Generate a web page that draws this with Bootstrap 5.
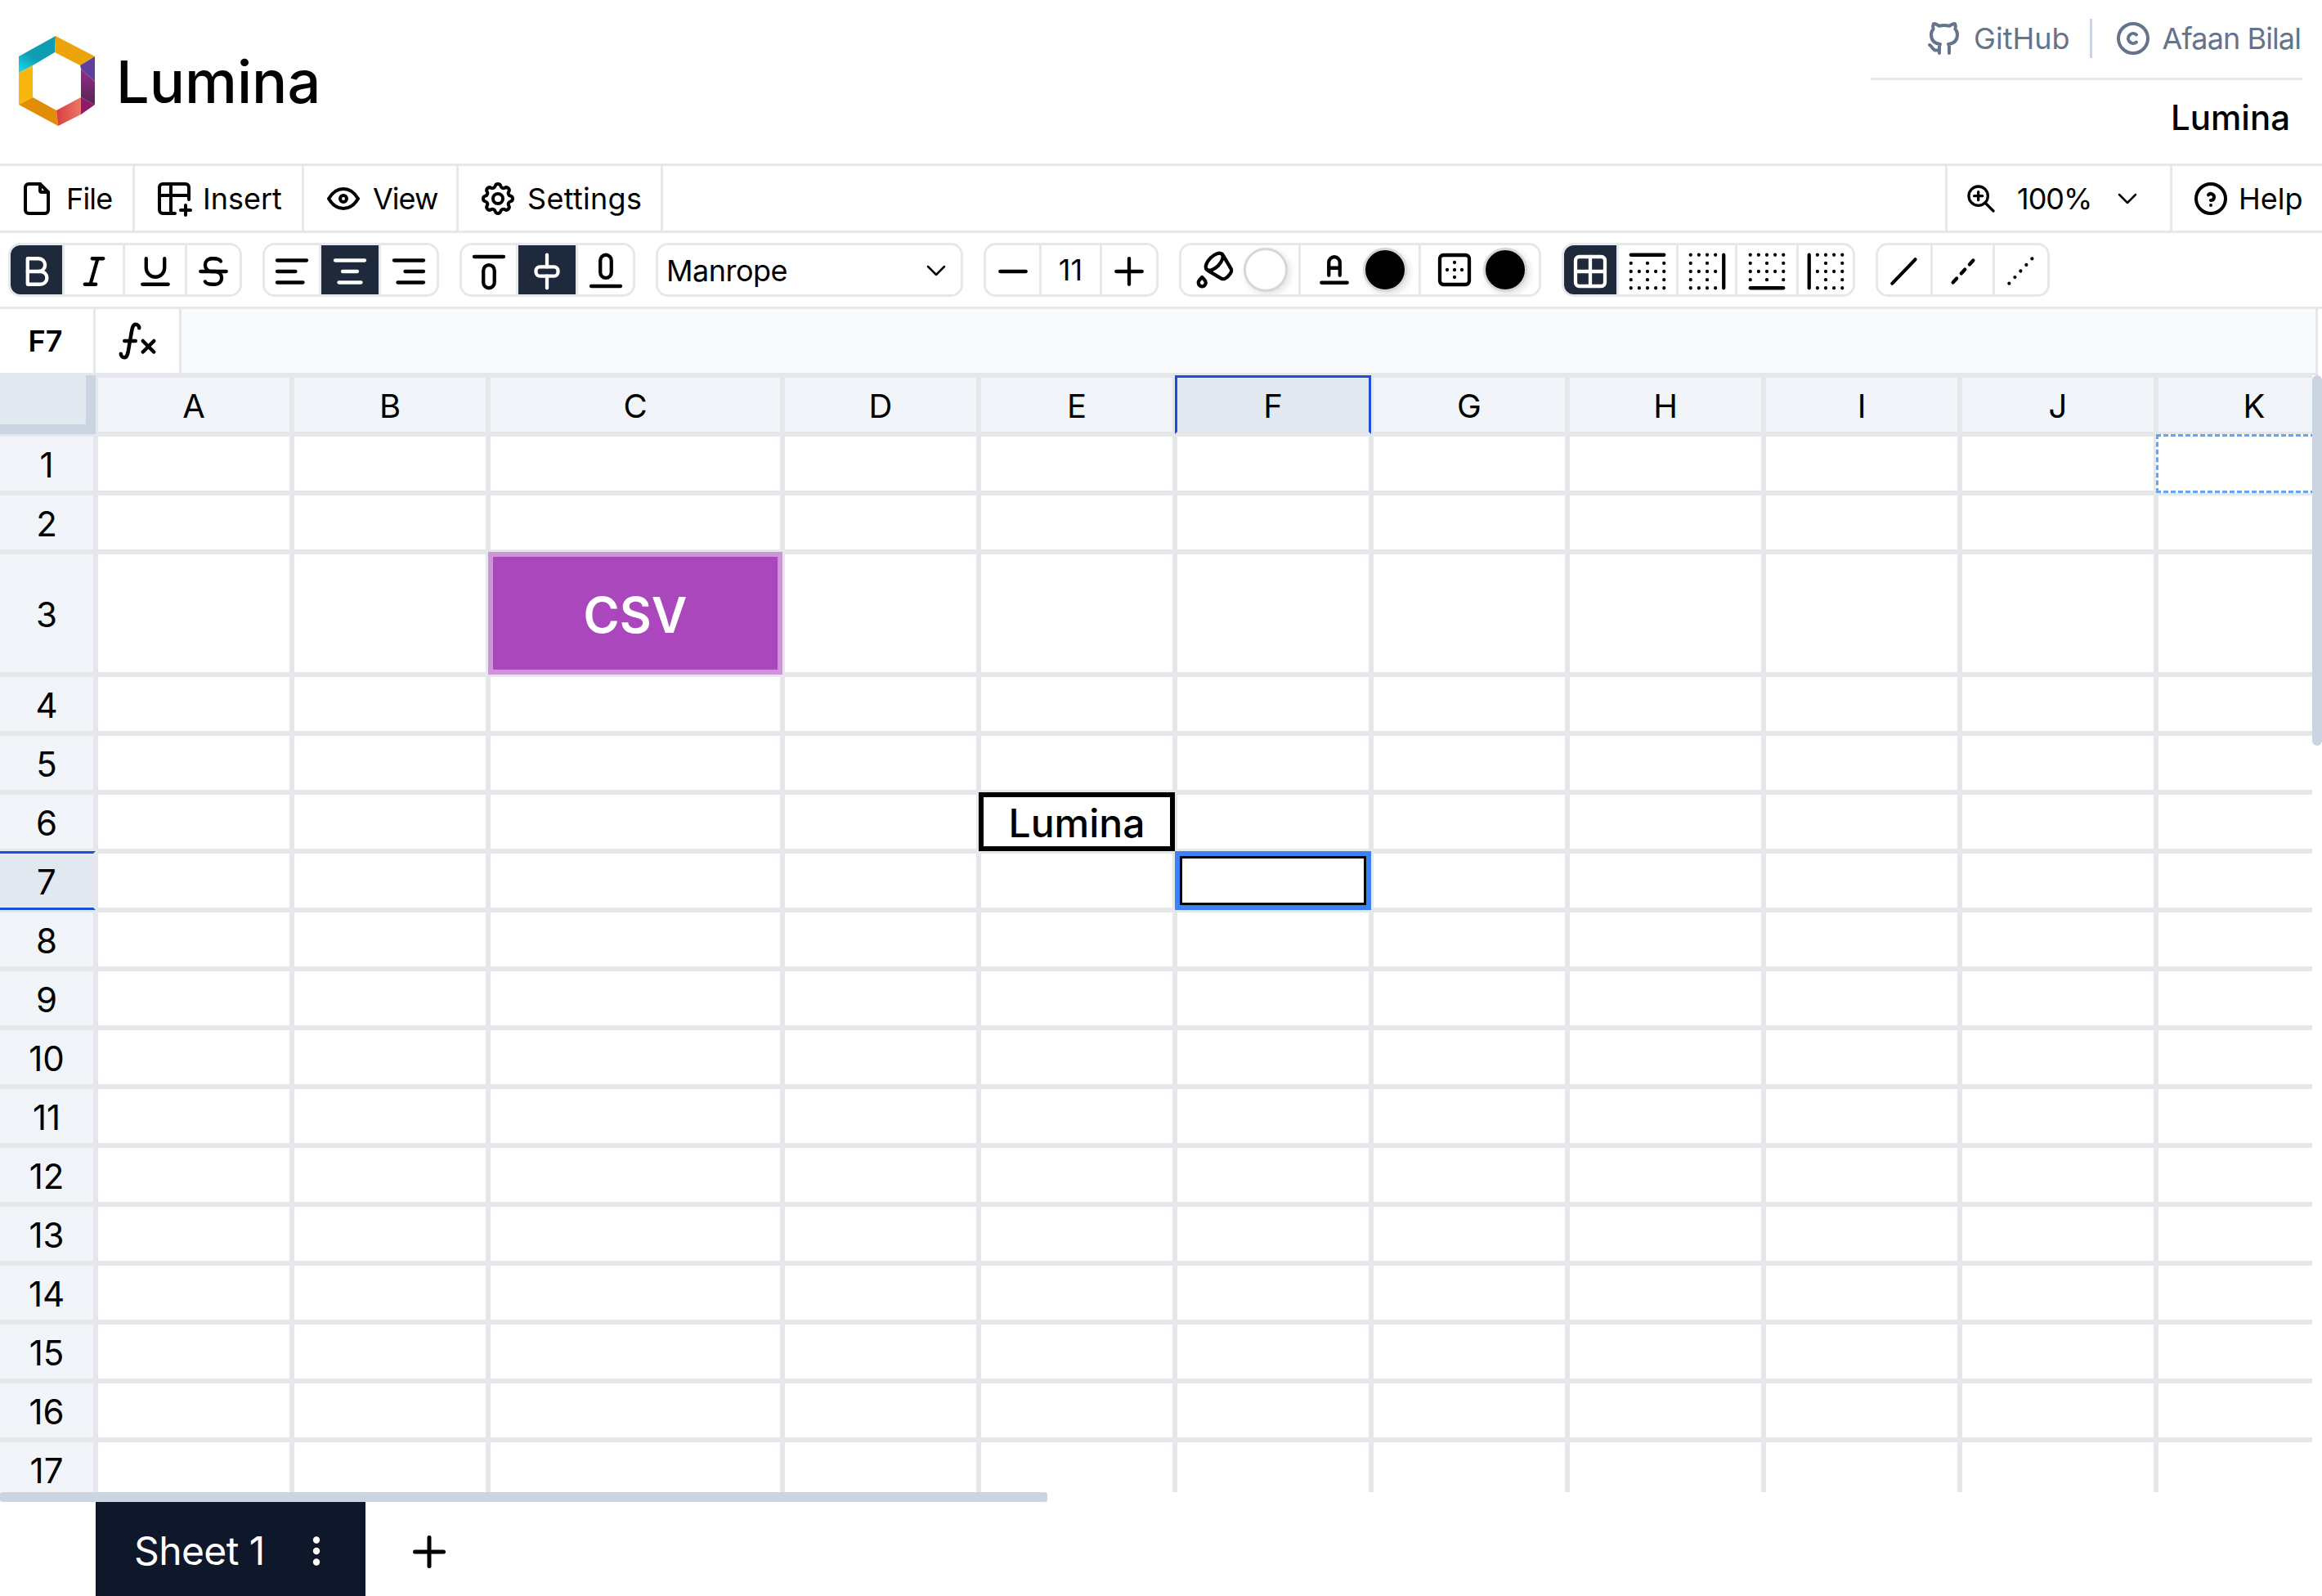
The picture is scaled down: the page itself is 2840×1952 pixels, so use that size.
<!DOCTYPE html>
<html lang="en">
  <head>
    <meta charset="UTF-8" />
    <title>Lumina</title>
    <link
      href="https://cdn.jsdelivr.net/npm/bootstrap@5.3.2/dist/css/bootstrap.min.css"
      rel="stylesheet"
    />
    <style>
      html,
      body {
        height: 1952px;
      }
      body {
        font-family: Inter, "Liberation Sans", sans-serif;
        font-size: 36px;
        color: #000;
        background: #fff;
        overflow: hidden;
      }
      .ico {
        width: 48px;
        height: 48px;
        flex: none;
        fill: none;
        stroke: currentColor;
        stroke-width: 2;
        stroke-linecap: round;
        stroke-linejoin: round;
      }
      .ico-sm {
        width: 40px;
        height: 40px;
      }
      .ico-chev {
        width: 40px;
        height: 40px;
        stroke-width: 1.5;
      }

      /* title bar */
      .top-bar {
        height: 203px;
        border-bottom: 3px solid #e5e7eb;
      }
      .brand-logo {
        width: 94px;
        height: 110px;
        margin: 44px 0 0 23px;
      }
      .brand-name {
        font-size: 72px;
        font-weight: 500;
        line-height: 1;
        margin: 64px 0 0 25px;
      }
      .top-right {
        width: 552px;
      }
      .top-links {
        height: 98px;
        width: 528px;
        border-bottom: 3px solid #e5e7eb;
        color: #64748b;
        padding: 0 2px 2px 0;
        gap: 12px;
      }
      .link-sep {
        width: 3px;
        height: 48px;
        background: #cbd5e1;
        margin: 0 14px 0 12px;
      }
      .link-tight {
        letter-spacing: -0.9px;
      }
      .doc-name {
        font-size: 42px;
        font-weight: 500;
        line-height: 1;
        padding: 25px 39px 0 0;
      }

      /* menu bar */
      .menu-bar {
        height: 82px;
        border-bottom: 3px solid #e5e7eb;
      }
      .menu-item {
        height: 79px;
        padding: 0 0 0 24px;
        gap: 12px;
        border-right: 3px solid #e5e7eb;
      }
      .menu-item:first-child {
        padding-left: 21px;
      }
      .w-file {
        width: 165px;
        letter-spacing: -0.8px;
      }
      .w-insert {
        width: 207px;
        gap: 11px;
      }
      .w-view {
        width: 189px;
        letter-spacing: -1px;
      }
      .w-settings {
        width: 250px;
        letter-spacing: 0.3px;
      }
      .menu-zoom {
        width: 275px;
        height: 79px;
        border-left: 3px solid #e5e7eb;
        padding-left: 21px;
        letter-spacing: -1px;
      }
      .menu-help {
        width: 186px;
        height: 79px;
        border-left: 3px solid #e5e7eb;
        padding-left: 23px;
        gap: 10px;
      }

      /* toolbar */
      .tool-bar {
        height: 93px;
        padding: 12px 0 0 10px;
        gap: 25px;
        border-bottom: 3px solid #e5e7eb;
      }
      .tool-grp {
        height: 66px;
        border: 3px solid #e5e7eb;
        border-radius: 15px;
        overflow: hidden;
      }
      .tool-btn {
        height: 60px;
        padding: 0;
        border: 0;
        border-right: 3px solid #e5e7eb;
        border-radius: 0;
        background: #fff;
        color: #000;
        font-size: 36px;
        flex: none;
      }
      .tool-btn .ico {
        width: 54px;
        height: 54px;
        stroke-width: 1.9;
      }
      .tool-btn .ico-chev {
        width: 40px;
        height: 40px;
        stroke-width: 1.5;
      }
      .tool-btn:last-child {
        border-right: 0;
      }
      .tool-btn.tool-on {
        background: #1e293b;
        color: #fff;
      }
      .font-pick {
        width: 370px;
        padding: 2px 10px 0 10px;
        letter-spacing: -0.5px;
      }
      .swatch {
        width: 54px;
        height: 54px;
        border-radius: 50%;
        border: 3px solid #d6d6d6;
        box-shadow: 3px 3px 8px rgba(0, 0, 0, 0.12);
      }
      .swatch-white {
        background: #fff;
      }
      .swatch-black {
        background: #000;
      }

      /* formula bar */
      .formula-bar {
        height: 81px;
        width: 2835px;
        border-bottom: 3px solid #e5e7eb;
        border-right: 3px solid #e5e7eb;
      }
      .cell-ref {
        width: 117px;
        border-right: 3px solid #e5e7eb;
        font-weight: 600;
        padding-right: 3px;
      }
      .fx-box {
        width: 105px;
        border-right: 3px solid #e5e7eb;
      }
      .fx-box .ico {
        width: 54px;
        height: 54px;
      }
      .fx-input {
        background: #f8fafc;
      }

      /* grid */
      .grid-view {
        width: 2828px;
        height: 1366px;
        overflow: hidden;
      }
      .sheet-grid {
        border-collapse: separate;
        border-spacing: 0;
        table-layout: fixed;
        width: 2877px;
      }
      .sheet-grid td,
      .sheet-grid th {
        box-sizing: border-box;
        height: 72px;
        padding: 0;
        border: 3px solid #e5e7eb;
        text-align: center;
        vertical-align: middle;
        line-height: 1;
        font-weight: 400;
      }
      .sheet-grid th {
        background: #f1f5f9;
        font-size: 40px;
        padding-top: 3px;
      }
      .sheet-grid tr.tall > * {
        height: 150px;
      }
      .sheet-grid th.grid-corner {
        background: #e2e8f0;
        border-width: 0 12px 12px 0;
        border-color: #cbd5e1;
      }
      .sheet-grid th.row-head {
        border-left: 0;
        font-size: 42px;
      }
      .sheet-grid th.col-on {
        background: #e2e8f0;
        border-color: #1d4ed8 #1d4ed8 #e5e7eb;
      }
      .sheet-grid th.row-on {
        background: #e2e8f0;
        border-color: #1d4ed8 #e5e7eb;
      }
      .sheet-grid td.cell-csv {
        background: #ab47bc;
        border: 6px solid #ce93d8;
        color: #fff;
        font-size: 60px;
        font-weight: 600;
        padding-top: 3px;
      }
      .sheet-grid td.cell-boxed {
        border: 6px solid #000;
        font-size: 48px;
        font-weight: 500;
        padding-top: 3px;
      }
      .sheet-grid td.cell-active {
        border: 6px solid #3b82f6;
      }
      .cell-input {
        height: 60px;
        border: 3px solid #000;
      }
      .sheet-grid td.cell-copy {
        border: 3px dashed #60a5fa;
      }

      /* scrollbars */
      .scroll-y {
        width: 12px;
      }
      .scroll-y-thumb {
        height: 453px;
        background: #cbd5e1;
        border-radius: 6px;
      }
      .scroll-x {
        height: 12px;
      }
      .scroll-x-thumb {
        width: 1281px;
        height: 12px;
        background: #cbd5e1;
        border-radius: 3px;
      }

      /* sheet tabs */
      .tab-bar {
        height: 115px;
        padding-left: 117px;
      }
      .sheet-tab {
        width: 330px;
        padding: 5px 36px 0 47px;
        background: #0f172a;
        color: #fff;
        font-size: 48px;
        letter-spacing: -0.6px;
      }
      .tab-dot {
        width: 48px;
        height: 48px;
      }
      .tab-add {
        margin: 6px 0 0 48px;
        width: 60px;
        height: 60px;
      }
    </style>
  </head>
  <body>
    <svg class="d-none">
      <symbol id="i-file" viewBox="0 0 24 24"><path d="M14 3v4a1 1 0 0 0 1 1h4" /><path d="M17 21h-10a2 2 0 0 1 -2 -2v-14a2 2 0 0 1 2 -2h7l5 5v11a2 2 0 0 1 -2 2z" /></symbol>
      <symbol id="i-table-plus" viewBox="0 0 24 24"><path d="M12.5 21h-7.5a2 2 0 0 1 -2 -2v-14a2 2 0 0 1 2 -2h14a2 2 0 0 1 2 2v7.5" /><path d="M3 10h18" /><path d="M10 3v18" /><path d="M16 19h6" /><path d="M19 16v6" /></symbol>
      <symbol id="i-eye" viewBox="0 0 24 24"><path d="M10 12a2 2 0 1 0 4 0a2 2 0 0 0 -4 0" /><path d="M21 12c-2.4 4 -5.4 6 -9 6c-3.6 0 -6.6 -2 -9 -6c2.4 -4 5.4 -6 9 -6c3.6 0 6.6 2 9 6" /></symbol>
      <symbol id="i-gear" viewBox="0 0 24 24"><path d="M10.325 4.317c.426 -1.756 2.924 -1.756 3.35 0a1.724 1.724 0 0 0 2.573 1.066c1.543 -.94 3.31 .826 2.37 2.37a1.724 1.724 0 0 0 1.065 2.572c1.756 .426 1.756 2.924 0 3.35a1.724 1.724 0 0 0 -1.066 2.573c.94 1.543 -.826 3.31 -2.37 2.37a1.724 1.724 0 0 0 -2.572 1.065c-.426 1.756 -2.924 1.756 -3.35 0a1.724 1.724 0 0 0 -2.573 -1.066c-1.543 .94 -3.31 -.826 -2.37 -2.37a1.724 1.724 0 0 0 -1.065 -2.572c-1.756 -.426 -1.756 -2.924 0 -3.35a1.724 1.724 0 0 0 1.066 -2.573c-.94 -1.543 .826 -3.31 2.37 -2.37c1 .608 2.296 .07 2.572 -1.065z" /><path d="M9 12a3 3 0 1 0 6 0a3 3 0 0 0 -6 0" /></symbol>
      <symbol id="i-zoom" viewBox="0 0 24 24"><path d="M3 10a7 7 0 1 0 14 0a7 7 0 1 0 -14 0" /><path d="M7 10h6" /><path d="M10 7v6" /><path d="M21 21l-6 -6" /></symbol>
      <symbol id="i-chev" viewBox="0 0 24 24"><path d="M6 9l6 6l6 -6" /></symbol>
      <symbol id="i-help" viewBox="0 0 24 24"><path d="M3 12a9 9 0 1 0 18 0a9 9 0 1 0 -18 0" /><path d="M12 16v.01" /><path d="M12 13a2 2 0 0 0 .914 -3.782a1.98 1.98 0 0 0 -2.414 .483" /></symbol>
      <symbol id="i-github" viewBox="0 0 24 24"><path d="M9 19c-4.3 1.4 -4.3 -2.5 -6 -3m12 5v-3.5c0 -1 .1 -1.4 -.5 -2c2.8 -.3 5.5 -1.4 5.5 -6a4.6 4.6 0 0 0 -1.3 -3.2a4.2 4.2 0 0 0 -.1 -3.2s-1.1 -.3 -3.5 1.3a12.3 12.3 0 0 0 -6.2 0c-2.4 -1.6 -3.5 -1.3 -3.5 -1.3a4.2 4.2 0 0 0 -.1 3.2a4.6 4.6 0 0 0 -1.3 3.2c0 4.6 2.7 5.7 5.5 6c-.6 .6 -.6 1.2 -.5 2v3.5" /></symbol>
      <symbol id="i-copyright" viewBox="0 0 24 24"><path d="M3 12a9 9 0 1 0 18 0a9 9 0 1 0 -18 0" /><path d="M14 9.75a3.016 3.016 0 0 0 -4.163 .173a2.993 2.993 0 0 0 0 4.154a3.016 3.016 0 0 0 4.163 .173" /></symbol>
      <symbol id="i-bold" viewBox="0 0 24 24"><path d="M7 5h6a3.5 3.5 0 0 1 0 7h-6z" /><path d="M13 12h1a3.5 3.5 0 0 1 0 7h-7v-7" /></symbol>
      <symbol id="i-italic" viewBox="0 0 24 24"><path d="M11 5h6" /><path d="M7 19h6" /><path d="M14 5l-4 14" /></symbol>
      <symbol id="i-underline" viewBox="0 0 24 24"><path d="M7 5v5a5 5 0 0 0 10 0v-5" /><path d="M5 19h14" /></symbol>
      <symbol id="i-strike" viewBox="0 0 24 24"><path d="M5 12h14" /><path d="M16 6.5a4 2 0 0 0 -4 -1.5h-1a3.5 3.5 0 0 0 0 7h2a3.5 3.5 0 0 1 0 7h-1.5a4 2 0 0 1 -4 -1.5" /></symbol>
      <symbol id="i-left" viewBox="0 0 24 24"><path d="M4 6h16" /><path d="M4 12h10" /><path d="M4 18h14" /></symbol>
      <symbol id="i-center" viewBox="0 0 24 24"><path d="M4 6h16" /><path d="M8 12h8" /><path d="M6 18h12" /></symbol>
      <symbol id="i-right" viewBox="0 0 24 24"><path d="M4 6h16" /><path d="M10 12h10" /><path d="M6 18h14" /></symbol>
      <symbol id="i-v-top" viewBox="0 0 24 24"><path d="M4 4h16" /><rect x="9" y="8.5" width="6" height="12.5" rx="3" /></symbol>
      <symbol id="i-v-mid" viewBox="0 0 24 24"><path d="M12 3v6.5" /><path d="M12 14.5v6.5" /><rect x="6" y="9.5" width="12" height="5" rx="2.2" /></symbol>
      <symbol id="i-v-bot" viewBox="0 0 24 24"><path d="M4 20h16" /><rect x="9" y="3" width="6" height="12.5" rx="3" /></symbol>
      <symbol id="i-minus" viewBox="0 0 24 24"><path d="M5 12h14" /></symbol>
      <symbol id="i-plus" viewBox="0 0 24 24"><path d="M12 5v14" /><path d="M5 12h14" /></symbol>
      <symbol id="i-bucket" viewBox="0 0 24 24"><path d="M5 16l1.465 1.638a2 2 0 1 1 -3.015 .099l1.55 -1.737z" /><path d="M13.737 9.737c2.299 -2.3 3.23 -5.095 2.081 -6.245c-1.15 -1.15 -3.945 -.217 -6.244 2.082c-2.3 2.299 -3.231 5.095 -2.082 6.244c1.15 1.15 3.945 .218 6.245 -2.081z" /><path d="M7.492 11.818c.362 .362 .768 .676 1.208 .934l6.895 4.047c1.078 .557 2.255 -.075 3.692 -1.512c1.437 -1.437 2.07 -2.614 1.512 -3.692c-.372 -.718 -1.72 -3.017 -4.047 -6.895a6.015 6.015 0 0 0 -.934 -1.208" /></symbol>
      <symbol id="i-text-color" viewBox="0 0 24 24"><path d="M9 15v-7a3 3 0 0 1 6 0v7" /><path d="M9 11h6" /><path d="M5 19h14" /></symbol>
      <symbol id="i-b-outer" viewBox="0 0 24 24"><rect x="4" y="4" width="16" height="16" rx="2" /><path d="M8 12h.01M12 12h.01M16 12h.01M12 8h.01M12 16h.01" /></symbol>
      <symbol id="i-b-all" viewBox="0 0 24 24"><rect x="4" y="4" width="16" height="16" rx="2" /><path d="M4 12h16" /><path d="M12 4v16" /></symbol>
      <symbol id="i-b-top" viewBox="0 0 24 24"><path d="M3 3h18" /><path d="M3 7.5h18.1M3 16.5h18.1" stroke-dasharray="0 9" /><path d="M3 12h18.1M3 21h18.1" stroke-dasharray="0 4.5" /></symbol>
      <symbol id="i-b-right" viewBox="0 0 24 24"><g transform="rotate(90 12 12)"><path d="M3 3h18" /><path d="M3 7.5h18.1M3 16.5h18.1" stroke-dasharray="0 9" /><path d="M3 12h18.1M3 21h18.1" stroke-dasharray="0 4.5" /></g></symbol>
      <symbol id="i-b-bottom" viewBox="0 0 24 24"><g transform="rotate(180 12 12)"><path d="M3 3h18" /><path d="M3 7.5h18.1M3 16.5h18.1" stroke-dasharray="0 9" /><path d="M3 12h18.1M3 21h18.1" stroke-dasharray="0 4.5" /></g></symbol>
      <symbol id="i-b-left" viewBox="0 0 24 24"><g transform="rotate(270 12 12)"><path d="M3 3h18" /><path d="M3 7.5h18.1M3 16.5h18.1" stroke-dasharray="0 9" /><path d="M3 12h18.1M3 21h18.1" stroke-dasharray="0 4.5" /></g></symbol>
      <symbol id="i-line" viewBox="0 0 24 24"><path d="M5.5 18.5L18 5.5" /></symbol>
      <symbol id="i-line-dash" viewBox="0 0 24 24"><path d="M6.5 18L17.5 6" stroke-dasharray="3 3.65" /></symbol>
      <symbol id="i-line-dot" viewBox="0 0 24 24"><path d="M5.5 18.5L18 5" stroke-dasharray="0 4.58" /></symbol>
      <symbol id="i-fx" viewBox="0 0 24 24"><path d="M3 19a2 2 0 0 0 2 2c2 0 2 -4 3 -9s1 -9 3 -9a2 2 0 0 1 2 2" /><path d="M5 12h6" /><path d="M15 12l6 6" /><path d="M15 18l6 -6" /></symbol>
    </svg>

    <!-- Title bar -->
    <header class="top-bar d-flex justify-content-between">
      <div class="d-flex">
        <svg class="brand-logo" viewBox="0 0 94 110">
          <defs>
            <linearGradient id="lg-teal" x1="0.7" y1="0" x2="0.1" y2="1">
              <stop offset="0.55" stop-color="#0e9db2" />
              <stop offset="1" stop-color="#14d9f0" />
            </linearGradient>
            <linearGradient id="lg-red" x1="0" y1="0" x2="1" y2="0">
              <stop offset="0" stop-color="#d93f40" />
              <stop offset="1" stop-color="#ea7868" />
            </linearGradient>
            <linearGradient id="lg-plum" x1="0" y1="0" x2="0" y2="1">
              <stop offset="0" stop-color="#982c8e" />
              <stop offset="1" stop-color="#55244f" />
            </linearGradient>
          </defs>
          <polygon points="45,0 0,25 0,45 17,36 44,20" fill="url(#lg-teal)" />
          <polygon points="45,0 93,25 75,36 44,20" fill="#eda30a" />
          <polygon points="0,45 17,36 17,75 0,84" fill="#f7b70d" />
          <polygon points="0,84 17,75 46,91 48,110" fill="#e28d06" />
          <polygon points="46,91 76,75 76,96 48,110" fill="url(#lg-red)" />
          <polygon points="76,75 93,84 76,96" fill="#8e1a6a" />
          <polygon points="75,36 93,25 93,56 76,40" fill="#5f3f9e" />
          <polygon points="76,40 93,56 93,84 76,75" fill="url(#lg-plum)" />
        </svg>
        <div class="brand-name">Lumina</div>
      </div>
      <div class="top-right d-flex flex-column align-items-end">
        <div class="top-links d-flex align-items-center justify-content-end align-self-start">
          <svg class="ico"><use href="#i-github" /></svg>
          <span>GitHub</span>
          <span class="link-sep"></span>
          <svg class="ico"><use href="#i-copyright" /></svg>
          <span class="link-tight">Afaan Bilal</span>
        </div>
        <div class="doc-name">Lumina</div>
      </div>
    </header>

    <!-- Menu bar -->
    <nav class="menu-bar d-flex justify-content-between">
      <div class="d-flex">
        <div class="menu-item w-file d-flex align-items-center"><svg class="ico"><use href="#i-file" /></svg>File</div>
        <div class="menu-item w-insert d-flex align-items-center"><svg class="ico"><use href="#i-table-plus" /></svg>Insert</div>
        <div class="menu-item w-view d-flex align-items-center"><svg class="ico"><use href="#i-eye" /></svg>View</div>
        <div class="menu-item w-settings d-flex align-items-center"><svg class="ico"><use href="#i-gear" /></svg>Settings</div>
      </div>
      <div class="d-flex">
        <div class="menu-zoom d-flex align-items-center">
          <svg class="ico ico-sm"><use href="#i-zoom" /></svg>
          <span class="ms-4">100%</span>
          <svg class="ico ico-chev ms-4"><use href="#i-chev" /></svg>
        </div>
        <div class="menu-help d-flex align-items-center"><svg class="ico"><use href="#i-help" /></svg>Help</div>
      </div>
    </nav>

    <!-- Toolbar -->
    <div class="tool-bar d-flex">
      <div class="tool-grp d-flex">
        <button class="btn tool-btn tool-on" style="width: 66px"><svg class="ico"><use href="#i-bold" /></svg></button>
        <button class="btn tool-btn" style="width: 74px"><svg class="ico"><use href="#i-italic" /></svg></button>
        <button class="btn tool-btn" style="width: 76px"><svg class="ico"><use href="#i-underline" /></svg></button>
        <button class="btn tool-btn" style="width: 64px"><svg class="ico"><use href="#i-strike" /></svg></button>
      </div>
      <div class="tool-grp d-flex">
        <button class="btn tool-btn" style="width: 69px"><svg class="ico"><use href="#i-left" /></svg></button>
        <button class="btn tool-btn tool-on" style="width: 73px"><svg class="ico"><use href="#i-center" /></svg></button>
        <button class="btn tool-btn" style="width: 68px"><svg class="ico"><use href="#i-right" /></svg></button>
      </div>
      <div class="tool-grp d-flex">
        <button class="btn tool-btn" style="width: 69px"><svg class="ico"><use href="#i-v-top" /></svg></button>
        <button class="btn tool-btn tool-on" style="width: 73px"><svg class="ico"><use href="#i-v-mid" /></svg></button>
        <button class="btn tool-btn" style="width: 67px"><svg class="ico"><use href="#i-v-bot" /></svg></button>
      </div>
      <div class="tool-grp d-flex">
        <button class="btn tool-btn font-pick d-flex align-items-center justify-content-between">
          Manrope
          <svg class="ico ico-chev"><use href="#i-chev" /></svg>
        </button>
      </div>
      <div class="tool-grp d-flex">
        <button class="btn tool-btn" style="width: 68px"><svg class="ico"><use href="#i-minus" /></svg></button>
        <div class="tool-btn d-flex align-items-center justify-content-center" style="width: 74px">11</div>
        <button class="btn tool-btn" style="width: 66px"><svg class="ico"><use href="#i-plus" /></svg></button>
      </div>
      <div class="tool-grp d-flex">
        <button class="btn tool-btn d-flex align-items-center justify-content-center gap-2" style="width: 146px"><svg class="ico"><use href="#i-bucket" /></svg><span class="swatch swatch-white"></span></button>
        <button class="btn tool-btn d-flex align-items-center justify-content-center gap-2" style="width: 147px"><svg class="ico"><use href="#i-text-color" /></svg><span class="swatch swatch-black"></span></button>
        <button class="btn tool-btn d-flex align-items-center justify-content-center gap-2" style="width: 144px"><svg class="ico"><use href="#i-b-outer" /></svg><span class="swatch swatch-black"></span></button>
      </div>
      <div class="tool-grp d-flex">
        <button class="btn tool-btn tool-on" style="width: 67px"><svg class="ico"><use href="#i-b-all" /></svg></button>
        <button class="btn tool-btn" style="width: 73px"><svg class="ico"><use href="#i-b-top" /></svg></button>
        <button class="btn tool-btn" style="width: 72px"><svg class="ico"><use href="#i-b-right" /></svg></button>
        <button class="btn tool-btn" style="width: 75px"><svg class="ico"><use href="#i-b-bottom" /></svg></button>
        <button class="btn tool-btn" style="width: 66px"><svg class="ico"><use href="#i-b-left" /></svg></button>
      </div>
      <div class="tool-grp d-flex">
        <button class="btn tool-btn" style="width: 67px"><svg class="ico"><use href="#i-line" /></svg></button>
        <button class="btn tool-btn" style="width: 76px"><svg class="ico"><use href="#i-line-dash" /></svg></button>
        <button class="btn tool-btn" style="width: 64px"><svg class="ico"><use href="#i-line-dot" /></svg></button>
      </div>
    </div>

    <!-- Formula bar -->
    <div class="formula-bar d-flex">
      <div class="cell-ref d-flex align-items-center justify-content-center">F7</div>
      <div class="fx-box d-flex align-items-center justify-content-center"><svg class="ico"><use href="#i-fx" /></svg></div>
      <div class="fx-input flex-grow-1"></div>
    </div>

    <!-- Grid -->
    <div class="d-flex">
      <div class="grid-view">
        <table class="sheet-grid" id="sheetGrid"></table>
      </div>
      <div class="scroll-y"><div class="scroll-y-thumb"></div></div>
    </div>
    <div class="scroll-x"><div class="scroll-x-thumb"></div></div>

    <!-- Sheet tabs -->
    <div class="tab-bar d-flex">
      <div class="sheet-tab d-flex align-items-center justify-content-between">
        <span>Sheet 1</span>
        <svg class="ico tab-dot" viewBox="0 0 24 24"><path d="M12 5.25v.01M12 12v.01M12 18.75v.01" stroke-width="4.2" /></svg>
      </div>
      <svg class="ico tab-add align-self-center"><use href="#i-plus" /></svg>
    </div>

    <script>
      // Build the sheet: 17 rows, columns A to K, C is the wide one
      const letters = "ABCDEFGHIJK".split("");
      const widths = { C: 360 };
      const filled = {
        C3: '<td class="cell-csv">CSV</td>',
        E6: '<td class="cell-boxed">Lumina</td>',
        F7: '<td class="cell-active"><div class="cell-input"></div></td>',
        K1: '<td class="cell-copy"></td>',
      };
      let html = '<colgroup><col style="width: 117px" />';
      letters.forEach((l) => {
        html += `<col style="width: ${widths[l] || 240}px" />`;
      });
      html += '</colgroup><tr><th class="grid-corner"></th>';
      letters.forEach((l) => {
        html += `<th class="${l === "F" ? "col-on" : ""}">${l}</th>`;
      });
      html += "</tr>";
      for (let r = 1; r <= 17; r++) {
        html += `<tr class="${r === 3 ? "tall" : ""}">`;
        html += `<th class="row-head ${r === 7 ? "row-on" : ""}">${r}</th>`;
        letters.forEach((l) => {
          html += filled[l + r] || "<td></td>";
        });
        html += "</tr>";
      }
      document.getElementById("sheetGrid").innerHTML = html;
    </script>
    <script src="https://cdn.jsdelivr.net/npm/bootstrap@5.3.2/dist/js/bootstrap.bundle.min.js"></script>
  </body>
</html>
